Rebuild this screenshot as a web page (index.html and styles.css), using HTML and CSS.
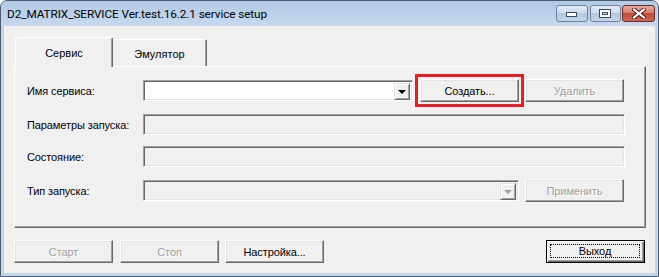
FILE: index.html
```html
<!DOCTYPE html>
<html lang="ru">
<head>
<meta charset="utf-8">
<title>D2_MATRIX_SERVICE setup</title>
<link rel="stylesheet" href="styles.css">
</head>
<body>
<div class="window">
  <div class="titlebar">
    <span class="title">D2_MATRIX_SERVICE Ver.test.16.2.1 service setup</span>
    <div class="caption-buttons">
      <div class="cap cap-min">
        <svg width="12" height="6" viewBox="0 0 12 6"><rect x="0.5" y="0.5" width="10" height="4" fill="#fff" stroke="#3c4a5e"/></svg>
      </div>
      <div class="cap cap-max">
        <svg width="13" height="10" viewBox="0 0 13 10"><rect x="0.5" y="0.5" width="11" height="8" fill="#fff" stroke="#3c4a5e"/><rect x="3.5" y="3.5" width="5" height="2" fill="#d6e2ef" stroke="#3c4a5e"/></svg>
      </div>
      <div class="cap cap-close">
        <svg width="14" height="11" viewBox="0 0 14 11"><path d="M2 1.5 L12 9.5 M12 1.5 L2 9.5" stroke="#4a1512" stroke-width="4" stroke-linecap="square"/><path d="M2 1.5 L12 9.5 M12 1.5 L2 9.5" stroke="#fff" stroke-width="2.2" stroke-linecap="square"/></svg>
      </div>
    </div>
  </div>
  <div class="client">
    <div class="tabs">
      <div class="tab active">Сервис</div>
      <div class="tab">Эмулятор</div>
    </div>
    <div class="panel">
      <div class="row row-1">
        <span class="label">Имя сервиса:</span>
        <div class="field combo white combo-name">
          <div class="drop"><span class="arrow"></span></div>
        </div>
        <div class="btn btn-create">Создать...</div>
        <div class="btn disabled btn-delete">Удалить</div>
      </div>
      <div class="row row-2">
        <span class="label">Параметры запуска:</span>
        <div class="field wide"></div>
      </div>
      <div class="row row-3">
        <span class="label">Состояние:</span>
        <div class="field wide"></div>
      </div>
      <div class="row row-4">
        <span class="label">Тип запуска:</span>
        <div class="field combo combo-type">
          <div class="drop"><span class="arrow grey"></span></div>
        </div>
        <div class="btn disabled btn-apply">Применить</div>
      </div>
    </div>
    <div class="bottom-buttons">
      <div class="btn disabled">Старт</div>
      <div class="btn disabled">Стоп</div>
      <div class="btn">Настройка...</div>
      <div class="btn default"><span class="focus">Выход</span></div>
    </div>
  </div>
</div>
</body>
</html>
```

FILE: styles.css
```css
* { box-sizing: border-box; }
html, body { margin: 0; padding: 0; background: #fff; }
body {
  width: 659px;
  height: 277px;
  overflow: hidden;
  font-family: "Liberation Sans", Arial, sans-serif;
  font-size: 11px;
  color: #000;
}
.window {
  width: 659px;
  height: 277px;
  border: 1px solid #4b5c72;
  border-radius: 7px 7px 0 0;
  background: #c3d6ec;
  display: flex;
  flex-direction: column;
}
.titlebar {
  height: 25px;
  flex: none;
  border-radius: 6px 6px 0 0;
  background: linear-gradient(to bottom, #b3cae4 0%, #bcd1ea 50%, #c6d9ee 100%);
  display: flex;
  align-items: flex-start;
  justify-content: space-between;
  padding: 0 3px 0 6px;
}
.title {
  font-family: "Roboto", "Liberation Sans", sans-serif;
  font-size: 11.8px;
  line-height: 26px;
  color: #000;
  letter-spacing: -0.1px;
}
.caption-buttons {
  display: flex;
  margin-top: 4px;
}
.cap {
  height: 17px;
  border: 1px solid #6f819a;
  border-radius: 3px;
  display: flex;
  align-items: center;
  justify-content: center;
  background: linear-gradient(to bottom, #e2ebf5 0%, #cfdcec 45%, #b4c8e0 50%, #c3d5ea 100%);
}
.cap-min { width: 32px; margin-right: 2px; padding-top: 3px; }
.cap-max { width: 31px; margin-right: 1px; }
.cap-close {
  width: 33px;
  border-color: #6b2a26;
  background: linear-gradient(to bottom, #e9a99b 0%, #d47e6f 45%, #c1493a 50%, #cf6b52 100%);
}
.client {
  flex: 1;
  margin: 0 3px 3px 3px;
  background: #f0f0f0;
  padding: 11px 9px 10px 10px;
  display: flex;
  flex-direction: column;
}
.tabs {
  height: 29px;
  display: flex;
  align-items: flex-end;
  padding-left: 1px;
}
.tab {
  width: 94px;
  height: 27px;
  background: #f0f0f0;
  border-top: 1px solid #fff;
  border-right: 1px solid #696969;
  box-shadow: inset -1px 0 #a0a0a0;
  border-radius: 2px 2px 0 0;
  display: flex;
  align-items: center;
  justify-content: center;
  padding-top: 1px;
}
.tab.active {
  width: 98px;
  height: 30px;
  margin-bottom: -1px;
  border-left: 1px solid #fff;
  position: relative;
  z-index: 1;
  padding-top: 0;
}
.panel {
  height: 162px;
  border-top: 1px solid #fff;
  border-left: 1px solid #fff;
  border-right: 1px solid #696969;
  border-bottom: 1px solid #696969;
  box-shadow: inset -1px -1px #a0a0a0;
  padding: 12px 0 0 12px;
  display: flex;
  flex-direction: column;
}
.row {
  display: flex;
  align-items: center;
}
.row-1 { height: 23px; }
.row-2 { height: 21px; margin-top: 12px; }
.row-3 { height: 21px; margin-top: 11px; }
.row-4 { height: 23px; margin-top: 12px; }
.label {
  width: 116px;
  flex: none;
  letter-spacing: -0.1px;
}
.field {
  height: 21px;
  border: 1px solid;
  border-color: #a0a0a0 #fff #fff #a0a0a0;
  box-shadow: inset 1px 1px #696969, inset -1px -1px #e3e3e3;
  background: #f0f0f0;
}
.field.white { background: #fff; }
.field.wide { width: 482px; }
.combo {
  display: flex;
  justify-content: flex-end;
  padding: 2px;
}
.combo-name { width: 270px; margin-right: 7px; }
.combo-type { width: 376px; margin-right: 6px; }
.drop {
  width: 16px;
  height: 17px;
  background: #f0f0f0;
  border: 1px solid;
  border-color: #e3e3e3 #696969 #696969 #e3e3e3;
  box-shadow: inset 1px 1px #fff, inset -1px -1px #a0a0a0;
  display: flex;
  align-items: center;
  justify-content: center;
}
.arrow {
  width: 0;
  height: 0;
  border-left: 4px solid transparent;
  border-right: 4px solid transparent;
  border-top: 4px solid #000;
  margin-top: 1px;
}
.arrow.grey { border-top-color: #a0a0a0; }
.btn {
  width: 99px;
  height: 23px;
  flex: none;
  border: 1px solid;
  border-color: #fff #696969 #696969 #fff;
  box-shadow: inset -1px -1px #a0a0a0, inset 1px 1px #e3e3e3;
  background: #f0f0f0;
  display: flex;
  align-items: center;
  justify-content: center;
  letter-spacing: -0.1px;
}
.btn.disabled {
  color: #a0a0a0;
  text-shadow: 1px 1px #fff;
}
.btn-create {
  outline: 3px solid #ed1c24;
  outline-offset: 2px;
  margin-right: 6px;
}
.bottom-buttons {
  margin-top: 12px;
  display: flex;
  gap: 7px;
}
.bottom-buttons .btn:nth-child(3) { margin-left: -1px; }
.btn.default {
  margin-left: auto;
  margin-right: 1px;
  border: 1px solid #000;
  box-shadow: inset 1px 1px #fff, inset -1px -1px #696969, inset -2px -2px #a0a0a0;
  padding: 3px 4px 4px 3px;
  align-items: stretch;
}
.focus {
  flex: 1;
  border: 1px dotted #000;
  display: flex;
  align-items: center;
  justify-content: center;
}
```
